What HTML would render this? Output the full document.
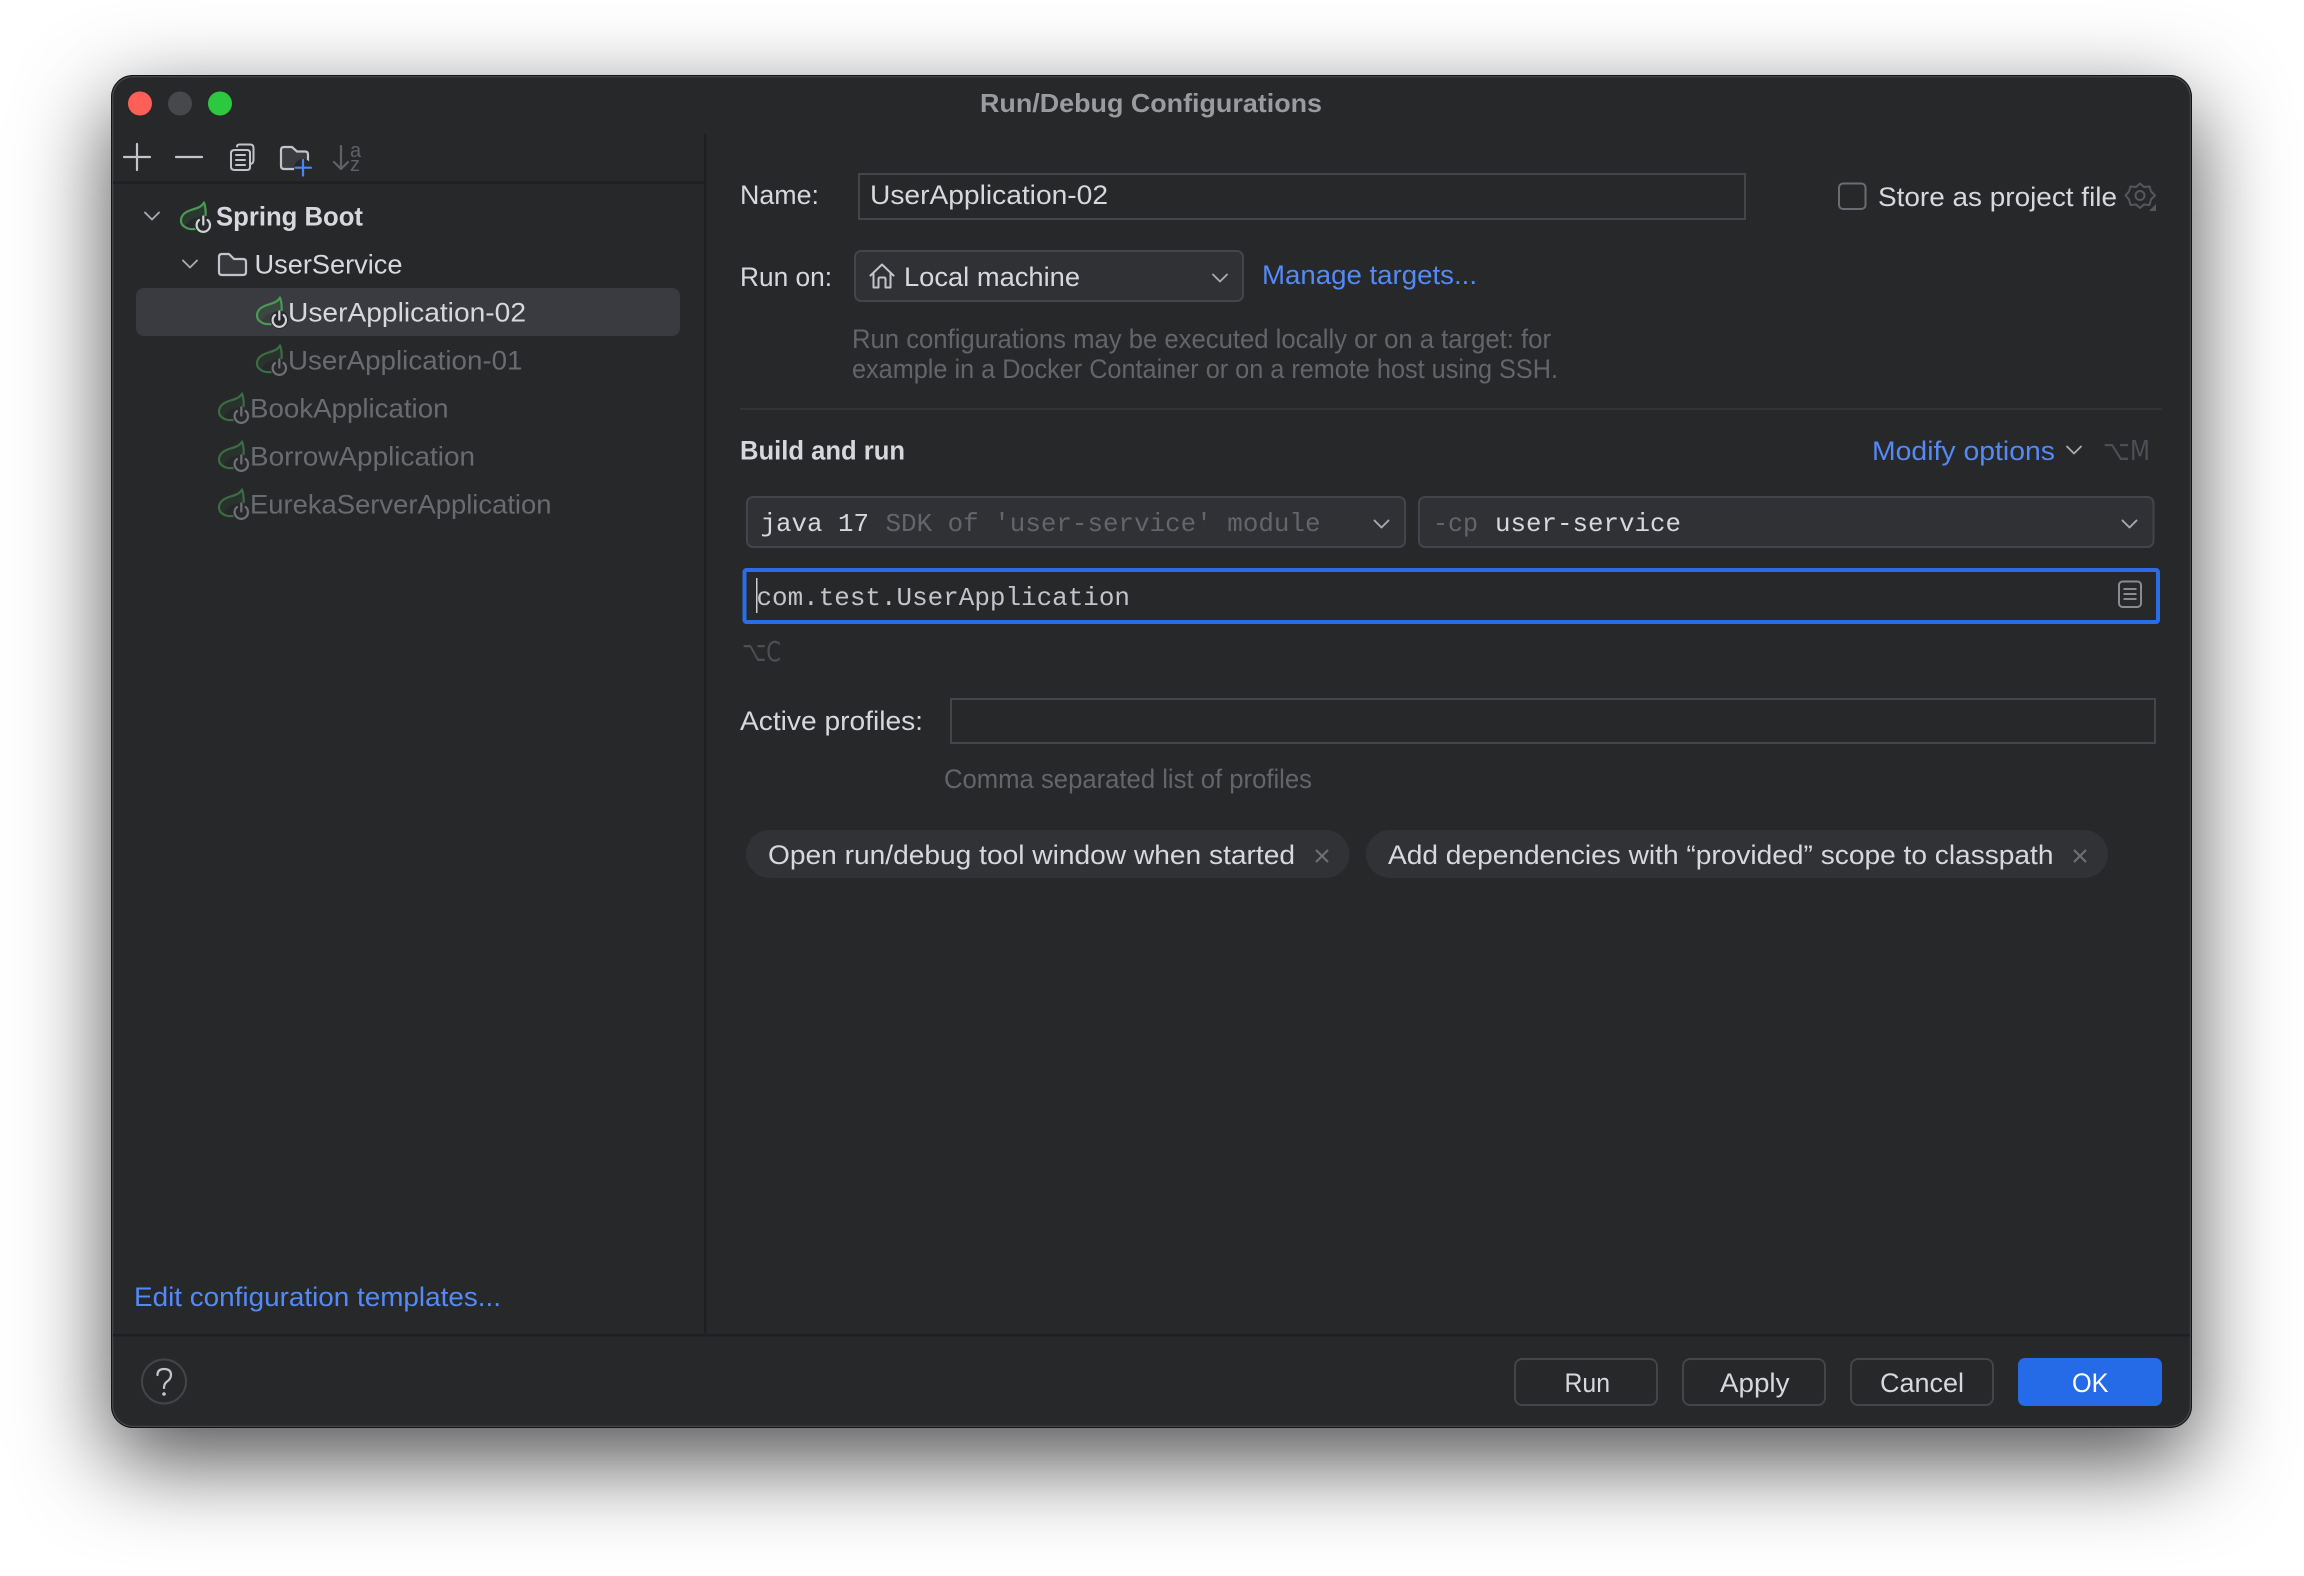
<!DOCTYPE html>
<html><head><meta charset="utf-8"><style>
html,body{margin:0;padding:0;background:#fff;width:2304px;height:1576px;overflow:hidden}
#win{position:absolute;left:111px;top:75px;width:2081px;height:1353px;border-radius:22px;background:#27282a;box-shadow:0 32px 90px 2px rgba(0,0,0,.68)}
svg{position:absolute;left:0;top:0}
text{font-family:"Liberation Sans",sans-serif;font-size:27px;fill:#d6d8dd}
.m{font-family:"Liberation Mono",monospace;font-size:26px}
.b{font-weight:700}
.d{fill:#696b70}
.h{fill:#63656a}
.l{fill:#548af7}
.k{fill:#4d4f54}
.i{fill:none;stroke:#c2c4ca;stroke-width:2.2;stroke-linecap:round;stroke-linejoin:round}
.c{fill:none;stroke:#a8aaaf;stroke-width:1.9;stroke-linecap:round;stroke-linejoin:round}
</style></head><body>
<div id="win"></div>
<svg width="2304" height="1576" viewBox="0 0 2304 1576" xmlns="http://www.w3.org/2000/svg">
<defs>
<g id="lf"><path d="M24 .5C22 5 16 6.500 11 8C5 10 1 13 1 18.500C1 22 3 24 5 25C6.500 21 9 18.500 13 16.500C17 15 22 15 25.500 14C26 10 25.500 5 24 .5Z" fill="#3c8a46" fill-opacity=".18" stroke="none"/><path d="M24 .5C22 5 16 6.500 11 8C5 10 1 13 1 18.500C1 22 3 24 5 25C7 26.500 11 27.500 15 27M24 .5C25.500 5 26 10 25.500 14" fill="none" stroke="#4b9a54" stroke-width="2.2" stroke-linecap="round"/></g>
<g id="pw"><circle cx="23.300" cy="22.700" r="9" fill="#27282a"/><path d="M19 18A6.700 6.700 0 1 0 27.600 18M23.300 14.500V22.500" fill="none" stroke="#d0d2d8" stroke-width="2.2" stroke-linecap="round"/></g>
<g id="pwd"><circle cx="23.300" cy="22.700" r="9" fill="#27282a"/><path d="M19 18A6.700 6.700 0 1 0 27.600 18M23.300 14.500V22.500" fill="none" stroke="#6f7176" stroke-width="2.2" stroke-linecap="round"/></g>
</defs>

<!-- window edge -->
<rect x="111.500" y="75.500" width="2080" height="1352" rx="21.500" fill="none" stroke="#141416" stroke-width="1"/>
<rect x="112.700" y="76.700" width="2077.600" height="1349.600" rx="20.500" fill="none" stroke="#47484b" stroke-width="1.200"/>

<!-- traffic lights -->
<circle cx="140" cy="103.500" r="12" fill="#fe5f57"/>
<circle cx="180" cy="103.500" r="12" fill="#47484b"/>
<circle cx="220" cy="103.500" r="12" fill="#2bc840"/>
<text x="980" y="112" class="b" textLength="342" lengthAdjust="spacingAndGlyphs" style="font-size:26px;fill:#9a9b9e">Run/Debug Configurations</text>

<!-- separators -->
<rect x="113" y="181.500" width="592" height="2.500" fill="#1e1f22"/>
<rect x="704" y="134" width="2.500" height="1201" fill="#1e1f22"/>
<rect x="113" y="1334" width="2077" height="2.500" fill="#1e1f22"/>

<!-- toolbar -->
<path class="i" d="M137 144V170M124 157H150"/>
<path class="i" d="M176 157H202"/>
<path class="i" d="M235 150H247Q250 150 250 153V167Q250 170 247 170H235Q231 170 231 167V153Q231 150 235 150ZM237 146.500Q237 144.500 239.500 144.500H250Q253.500 144.500 253.500 148V160Q253.500 163 251 164M236 155H245M236 160H245M236 165H245" style="stroke-width:2"/>
<path d="M281 150Q281 147 284 147H292L297 151.500H305Q308 151.500 308 154.500V166Q308 169 305 169H284Q281 169 281 166Z" fill="#3a3b3f" stroke="#c2c4ca" stroke-width="2.200"/>
<circle cx="303" cy="168" r="9" fill="#27282a"/>
<path d="M303 160V175.500M295.500 167.700H311" stroke="#4a86ef" stroke-width="2.200" stroke-linecap="round" fill="none"/>
<path d="M341 146V169M334 162L341 169L348 162" fill="none" stroke="#5f6166" stroke-width="2.200" stroke-linecap="round" stroke-linejoin="round"/>
<text x="350" y="157" style="font-size:20px;fill:#5f6166">a</text>
<text x="350" y="171" style="font-size:20px;fill:#5f6166">z</text>

<!-- tree -->
<rect x="136" y="288" width="544" height="48" rx="8" fill="#393b40"/>
<path class="c" d="M145 212.500L152 219.500L159 212.500M183 260.500L190 267.500L197 260.500"/>
<use href="#lf" x="180" y="202"/><use href="#pw" x="180" y="202"/>
<text x="216" y="225.500" class="b" textLength="147" lengthAdjust="spacingAndGlyphs">Spring Boot</text>
<path d="M219 257Q219 254 222 254H229L234 259H243Q246 259 246 262V272Q246 275 243 275H222Q219 275 219 272Z" fill="#36373b" stroke="#c2c4ca" stroke-width="2.200" stroke-linejoin="round"/>
<text x="254.500" y="273.500" textLength="148" lengthAdjust="spacingAndGlyphs">UserService</text>
<use href="#lf" x="256" y="297"/><use href="#pw" x="256" y="297"/>
<text x="288" y="321.500" textLength="238" lengthAdjust="spacingAndGlyphs">UserApplication-02</text>
<g opacity=".6"><use href="#lf" x="256" y="345"/></g><use href="#pwd" x="256" y="345"/>
<text x="288" y="369.500" class="d" textLength="234.500" lengthAdjust="spacingAndGlyphs">UserApplication-01</text>
<g opacity=".6"><use href="#lf" x="218" y="393"/></g><use href="#pwd" x="218" y="393"/>
<text x="250" y="417.500" class="d" textLength="198.500" lengthAdjust="spacingAndGlyphs">BookApplication</text>
<g opacity=".6"><use href="#lf" x="218" y="441"/></g><use href="#pwd" x="218" y="441"/>
<text x="250" y="465.500" class="d" textLength="225" lengthAdjust="spacingAndGlyphs">BorrowApplication</text>
<g opacity=".6"><use href="#lf" x="218" y="489"/></g><use href="#pwd" x="218" y="489"/>
<text x="250" y="513.500" class="d" textLength="301.500" lengthAdjust="spacingAndGlyphs">EurekaServerApplication</text>

<text x="134" y="1306" class="l" textLength="367" lengthAdjust="spacingAndGlyphs">Edit configuration templates...</text>

<!-- name row -->
<text x="740" y="204" textLength="79" lengthAdjust="spacingAndGlyphs">Name:</text>
<rect x="859" y="174" width="886" height="45" fill="none" stroke="#43454a" stroke-width="2"/>
<text x="870" y="204" textLength="238" lengthAdjust="spacingAndGlyphs">UserApplication-02</text>
<rect x="1839" y="183.500" width="26.500" height="25.500" rx="4" fill="none" stroke="#6a6c71" stroke-width="2"/>
<text x="1878" y="206" textLength="239" lengthAdjust="spacingAndGlyphs">Store as project file</text>
<path d="M2140 183.500L2144 187L2149.500 186.500L2151 191.500L2155 195.500L2151 199.500L2149.500 205L2144 204.500L2140 208L2136 204.500L2130.500 205L2129 199.500L2125.500 195.500L2129 191.500L2130.500 186.500L2136 187Z" fill="none" stroke="#55575c" stroke-width="2" stroke-linejoin="round"/>
<circle cx="2140" cy="195.500" r="4.500" fill="none" stroke="#55575c" stroke-width="2"/>
<path d="M2156 204V211H2149Z" fill="#55575c"/>

<!-- run on -->
<text x="740" y="286" textLength="92" lengthAdjust="spacingAndGlyphs">Run on:</text>
<rect x="855" y="251" width="388" height="50" rx="6" fill="#303135" stroke="#43454a" stroke-width="2"/>
<path d="M870.500 275.500L882 264.500L893.500 275.500M873.500 273V287.500H878.500V279Q878.500 277.500 880 277.500H884Q885.500 277.500 885.500 279V287.500H890.500V273" fill="none" stroke="#c2c4ca" stroke-width="2" stroke-linejoin="round" stroke-linecap="round"/>
<text x="904" y="286" textLength="176" lengthAdjust="spacingAndGlyphs">Local machine</text>
<path class="c" d="M1213 274.500L1220 281.500L1227 274.500"/>
<text x="1262" y="284" class="l" textLength="215" lengthAdjust="spacingAndGlyphs">Manage targets...</text>
<text x="852" y="348" class="h" textLength="699" lengthAdjust="spacingAndGlyphs">Run configurations may be executed locally or on a target: for</text>
<text x="852" y="378" class="h" textLength="706" lengthAdjust="spacingAndGlyphs">example in a Docker Container or on a remote host using SSH.</text>
<rect x="740" y="408" width="1422" height="2" fill="#323337"/>

<!-- build and run -->
<text x="740" y="459.500" class="b" textLength="165" lengthAdjust="spacingAndGlyphs">Build and run</text>
<text x="1872" y="460" class="l" textLength="183" lengthAdjust="spacingAndGlyphs">Modify options</text>
<path class="c" d="M2067 446.500L2074 453.500L2081 446.500"/>
<text x="2103" y="460" class="k" textLength="47" lengthAdjust="spacingAndGlyphs" style="font-family:'DejaVu Sans',sans-serif;font-size:28px">⌥M</text>

<!-- combos -->
<rect x="747" y="497" width="658" height="50" rx="6" fill="#303135" stroke="#43454a" stroke-width="2"/>
<text x="760.500" y="531" class="m" textLength="108.500" lengthAdjust="spacingAndGlyphs">java 17</text>
<text x="885.500" y="531" class="m h" textLength="435" lengthAdjust="spacingAndGlyphs">SDK of 'user-service' module</text>
<path class="c" d="M1374.500 520.500L1381.500 527.500L1388.500 520.500"/>
<rect x="1419" y="497" width="734.500" height="50" rx="6" fill="#303135" stroke="#43454a" stroke-width="2"/>
<text x="1433" y="531" class="m h" textLength="45" lengthAdjust="spacingAndGlyphs">-cp</text>
<text x="1495" y="531" class="m" textLength="186" lengthAdjust="spacingAndGlyphs">user-service</text>
<path class="c" d="M2122.500 520.500L2129.500 527.500L2136.500 520.500"/>

<!-- main class field -->
<rect x="744.500" y="570" width="1413.500" height="52" rx="2" fill="#27282a" stroke="#2a6de6" stroke-width="4"/>
<text x="756.500" y="605" class="m" textLength="373.500" lengthAdjust="spacingAndGlyphs" style="fill:#c2c4ca">com.test.UserApplication</text>
<rect x="756" y="578" width="1.500" height="35" fill="#c9cbd0"/>
<rect x="2119" y="581.500" width="22" height="25.500" rx="3.500" fill="none" stroke="#898b90" stroke-width="2"/>
<path d="M2123.500 589H2136.500M2123.500 594H2136.500M2123.500 599H2136.500" stroke="#898b90" stroke-width="2" fill="none"/>
<text x="742" y="661" class="k" textLength="39" lengthAdjust="spacingAndGlyphs" style="font-family:'DejaVu Sans',sans-serif;font-size:28px">⌥C</text>

<!-- profiles -->
<text x="740" y="730" textLength="183" lengthAdjust="spacingAndGlyphs">Active profiles:</text>
<rect x="951" y="699" width="1204" height="44" fill="none" stroke="#43454a" stroke-width="2"/>
<text x="944" y="788" class="h" textLength="368" lengthAdjust="spacingAndGlyphs">Comma separated list of profiles</text>

<!-- chips -->
<rect x="746" y="830" width="603.500" height="48" rx="24" fill="#313236"/>
<text x="768" y="864" textLength="527" lengthAdjust="spacingAndGlyphs">Open run/debug tool window when started</text>
<path d="M1316 850L1328 862M1328 850L1316 862" stroke="#6f7176" stroke-width="2" fill="none"/>
<rect x="1366" y="830" width="742" height="48" rx="24" fill="#313236"/>
<text x="1388" y="864" textLength="665.500" lengthAdjust="spacingAndGlyphs">Add dependencies with “provided” scope to classpath</text>
<path d="M2074 850L2086 862M2086 850L2074 862" stroke="#6f7176" stroke-width="2" fill="none"/>

<!-- footer -->
<circle cx="164" cy="1381.500" r="22" fill="none" stroke="#43454a" stroke-width="2"/>
<path d="M157.500 1375Q157.500 1369 164 1369Q171 1369 171 1375Q171 1379 166.500 1382Q164 1384 164 1388" fill="none" stroke="#c2c4ca" stroke-width="2.200" stroke-linecap="round"/>
<circle cx="164" cy="1394" r="1.800" fill="#c2c4ca"/>

<rect x="1515" y="1359" width="142" height="46" rx="7" fill="none" stroke="#43454a" stroke-width="2"/>
<text x="1564.500" y="1392" textLength="45.500" lengthAdjust="spacingAndGlyphs">Run</text>
<rect x="1683" y="1359" width="142" height="46" rx="7" fill="none" stroke="#43454a" stroke-width="2"/>
<text x="1720" y="1392" textLength="69.500" lengthAdjust="spacingAndGlyphs">Apply</text>
<rect x="1851" y="1359" width="142" height="46" rx="7" fill="none" stroke="#43454a" stroke-width="2"/>
<text x="1880" y="1392" textLength="84" lengthAdjust="spacingAndGlyphs">Cancel</text>
<rect x="2018" y="1358" width="144" height="48" rx="7" fill="#256be8"/>
<text x="2072" y="1392" textLength="36.500" lengthAdjust="spacingAndGlyphs" style="fill:#fff">OK</text>
</svg>
</body></html>
